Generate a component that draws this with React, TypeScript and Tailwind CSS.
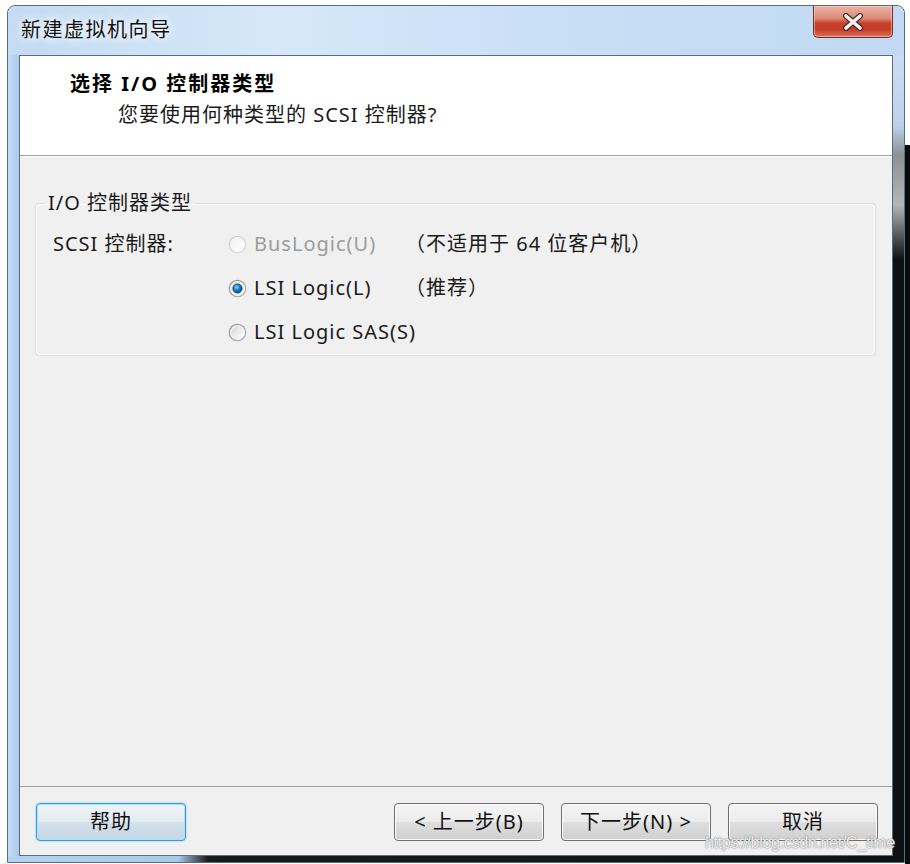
import React from "react";

const ui = "font-['Noto_Sans','Noto_Sans_CJK_SC',sans-serif] tracking-[1px]";

const Radio = ({ id, checked, disabled }: { id: string; checked?: boolean; disabled?: boolean }) => (
    <svg width="19" height="19" viewBox="0 0 19 19" className="shrink-0">
        <defs>
            <linearGradient id={`${id}-ring`} x1="0" y1="0" x2="1" y2="1">
                <stop offset="0" stopColor={disabled ? "#c8c8c8" : "#8a8a8a"} />
                <stop offset="1" stopColor={disabled ? "#dcdcdc" : "#b4b4b4"} />
            </linearGradient>
            <linearGradient id={`${id}-fill`} x1="0" y1="0" x2="1" y2="1">
                <stop offset="0" stopColor={disabled ? "#f0f0f0" : "#d6d6d6"} />
                <stop offset="1" stopColor="#ffffff" />
            </linearGradient>
            <radialGradient id={`${id}-dot`} cx="0.4" cy="0.35" r="0.7">
                <stop offset="0" stopColor="#8fd3ff" />
                <stop offset="0.45" stopColor="#1f82d0" />
                <stop offset="1" stopColor="#0b3f73" />
            </radialGradient>
        </defs>
        <circle cx="9.5" cy="9.5" r="8.8" fill={`url(#${id}-ring)`} />
        <circle cx="9.5" cy="9.5" r="7.6" fill="#fafafa" />
        <circle cx="9.5" cy="9.5" r="6.4" fill={`url(#${id}-fill)`} />
        {checked && <circle cx="9.5" cy="9.5" r="4.6" fill={`url(#${id}-dot)`} stroke="#0f3a66" strokeWidth="0.8" />}
    </svg>
);

const WinButton = ({ children, focused }: { children: React.ReactNode; focused?: boolean }) => (
    <button
        className={
            focused
                ? "w-[150px] h-[38px] rounded-[4px] border border-[#3c9ad6] bg-[linear-gradient(#eef4f8_0%,#e2ebf2_50%,#d3e1eb_51%,#c6d6e2_100%)] shadow-[inset_0_0_0_1px_#a6e3fa,0_0_2px_#5cc4f2] text-[20px] text-[#111] tracking-[1px]"
                : "w-[150px] h-[38px] rounded-[4px] border border-[#707070] bg-[linear-gradient(#f4f4f4_0%,#ececec_50%,#dedede_51%,#d0d0d0_100%)] shadow-[inset_0_0_0_1px_#fbfbfb] text-[20px] text-[#111] tracking-[1px]"
        }
    >
        {children}
    </button>
);

const CloseButton = () => (
    <div className="w-[80px] h-[32px] rounded-b-[5px] border border-t-0 border-[#7a2a20] bg-[linear-gradient(#eab3a5_0%,#dc8a78_40%,#c8432d_55%,#c23c27_75%,#d7735e_100%)] shadow-[inset_0_0_0_1px_rgba(255,220,210,0.5)] flex items-center justify-center">
        <svg width="22" height="18" viewBox="0 0 22 18">
            <path d="M4 3 L18 15 M18 3 L4 15" stroke="#4a2a25" strokeWidth="6" strokeLinecap="round" />
            <path d="M4 3 L18 15 M18 3 L4 15" stroke="#f2f2f2" strokeWidth="3.6" strokeLinecap="round" />
        </svg>
    </div>
);

const App = () => {
    const rows = [
        { id: "bus", label: "BusLogic(U)", note: "（不适用于 64 位客户机）", disabled: true },
        { id: "lsi", label: "LSI Logic(L)", note: "（推荐）", checked: true },
        { id: "sas", label: "LSI Logic SAS(S)", note: "" },
    ];

    return (
        <div className={`relative w-[910px] h-[864px] bg-white pt-[5px] pl-[7px] flex items-start overflow-hidden ${ui}`}>
            <div className="w-[898px] h-[858px] rounded-t-[8px] border border-[#5b6d80] flex flex-col overflow-hidden bg-[#b9d3ef]">
                {/* title bar */}
                <div className="h-[49px] flex justify-between items-start bg-[linear-gradient(to_right,#c3dbf3_0%,#d6e8f9_30%,#c9dff6_60%,#c1d9f2_100%)]">
                    <div className="pl-[13px] pt-[10px] text-[20px] leading-[28px] tracking-[1.5px] text-[#111] [text-shadow:0_0_8px_#ffffff,0_0_12px_#ffffff]">
                        新建虚拟机向导
                    </div>
                    <div className="mr-[11px]">
                        <CloseButton />
                    </div>
                </div>

                <div className="flex flex-1">
                    <div className="w-[11px] bg-[linear-gradient(to_right,#c6ddf5,#a9caee)]" />

                    {/* client area */}
                    <div className="w-[874px] flex flex-col border border-[#5f6b78] bg-[#f0f0f0]">
                        <div className="h-[99px] bg-white pt-[14px]">
                            <div className="pl-[50px] text-[20px] leading-[28px] tracking-[2px] font-bold text-black">选择 I/O 控制器类型</div>
                            <div className="pl-[98px] mt-[3px] text-[20px] leading-[28px] text-[#1a1a1a]">
                                您要使用何种类型的 SCSI 控制器?
                            </div>
                        </div>
                        <div className="border-t border-[#a0a0a0] border-b border-b-white" />

                        <div className="flex-1 pt-[32px] pl-[15px] pr-[16px]">
                            <fieldset className="rounded-[4px] border border-[#d5dfe5] shadow-[inset_0_0_0_1px_#ffffff] pb-[9px]">
                                <legend className="ml-[9px] px-[3px] text-[20px] leading-[28px] text-[#1a1a1a]">I/O 控制器类型</legend>
                                <div className="mt-[13px] grid grid-cols-[175px_177px_1fr] gap-y-[16px] pl-[17px]">
                                    {rows.map((row, index) => (
                                        <React.Fragment key={row.id}>
                                            <div className="h-[28px] text-[20px] leading-[28px] text-[#1a1a1a]">
                                                {index === 0 ? "SCSI 控制器:" : ""}
                                            </div>
                                            <div className="h-[28px] flex items-center gap-[7px]">
                                                <Radio id={row.id} checked={row.checked} disabled={row.disabled} />
                                                <span className={`text-[20px] leading-[28px] whitespace-nowrap ${row.disabled ? "text-[#9c9c9c]" : "text-[#1a1a1a]"}`}>
                                                    {row.label}
                                                </span>
                                            </div>
                                            <div className="h-[28px] text-[20px] leading-[28px] text-[#1a1a1a] whitespace-nowrap">{row.note}</div>
                                        </React.Fragment>
                                    ))}
                                </div>
                            </fieldset>
                        </div>

                        <div className="border-t border-[#a0a0a0] pt-[16px] pb-[14px] pl-[16px] pr-[14px] flex items-center">
                            <WinButton focused>帮助</WinButton>
                            <div className="ml-auto flex gap-[17px]">
                                <WinButton>&lt; 上一步(B)</WinButton>
                                <WinButton>下一步(N) &gt;</WinButton>
                                <WinButton>取消</WinButton>
                            </div>
                        </div>
                    </div>

                    <div className="w-[11px] bg-[linear-gradient(to_bottom,#c9def5_0px,#bcd2ea_70px,#8c9196_100px,#b5b5b5_150px,#3a3a3a_190px,#0e1013_205px,#0e1013_100%)]" />
                </div>

                <div className="h-[6px] bg-[linear-gradient(to_right,#b4d2f2_0px,#a9c9ec_170px,#1a1a1a_200px,#111111_100%)]" />
            </div>

            <div className="w-[5px] h-[719px] mt-[140px] bg-[#0b0b0b]" />

            <div className="absolute left-[705px] top-[833px] text-[16px] leading-[20px] font-['Liberation_Sans',sans-serif] text-white/85 [text-shadow:0_0_1px_#777,0_0_2px_#999] tracking-[-0.3px]">
                https://blog.csdn.net/C_time
            </div>
        </div>
    );
};

export default App;
